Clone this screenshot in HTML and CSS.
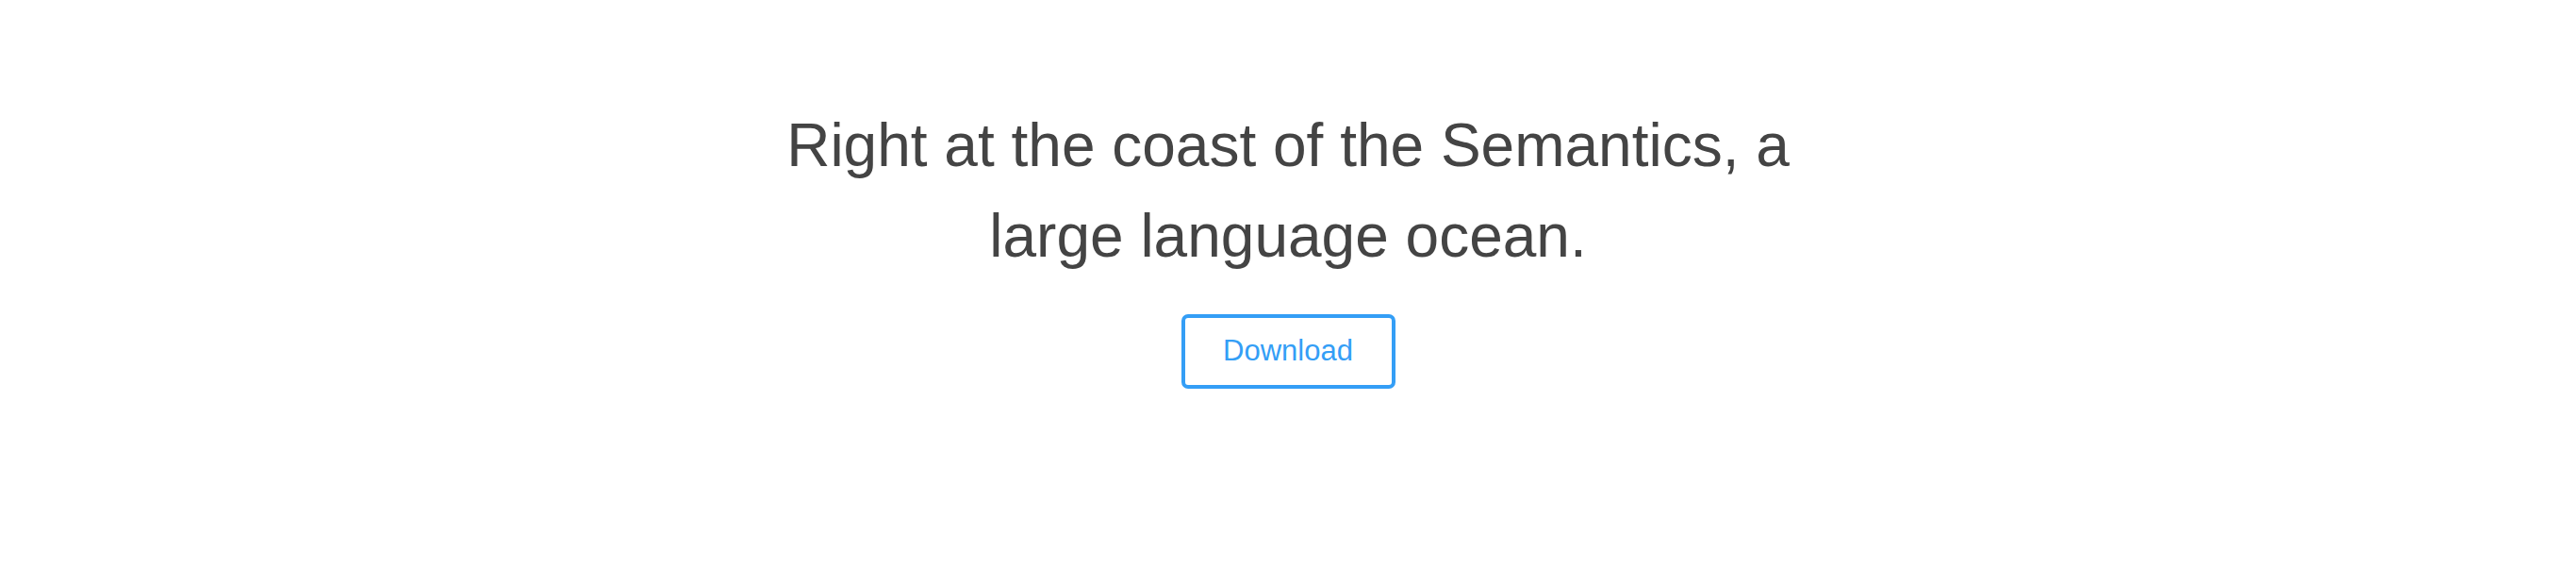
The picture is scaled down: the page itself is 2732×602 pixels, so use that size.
FILE: index.html
```html
<!DOCTYPE html>
<html lang="en">
<head>
<meta charset="utf-8">
<title>Semantics</title>
<link rel="stylesheet" href="styles.css">
</head>
<body>
<main class="hero">
  <h1 class="hero-title">Right at the coast of the Semantics, a large language ocean.</h1>
  <a class="btn-outline" href="#">Download</a>
</main>
</body>
</html>
```

FILE: styles.css
```css
html, body {
  margin: 0;
  padding: 0;
  background: #ffffff;
}
body {
  font-family: "Liberation Sans", Arial, Helvetica, sans-serif;
  color: #444444;
}
.hero {
  display: flex;
  flex-direction: column;
  align-items: center;
  padding-top: 106px;
}
.hero-title {
  margin: 0 0 35px 0;
  max-width: 1100px;
  font-size: 64px;
  font-weight: normal;
  line-height: 96px;
  text-align: center;
  color: #444444;
}
.btn-outline {
  box-sizing: border-box;
  display: flex;
  align-items: center;
  justify-content: center;
  width: 227px;
  height: 79px;
  border: 4px solid #349ef6;
  border-radius: 7px;
  color: #349ef6;
  font-size: 31px;
  text-decoration: none;
  padding-bottom: 2px;
}
```
